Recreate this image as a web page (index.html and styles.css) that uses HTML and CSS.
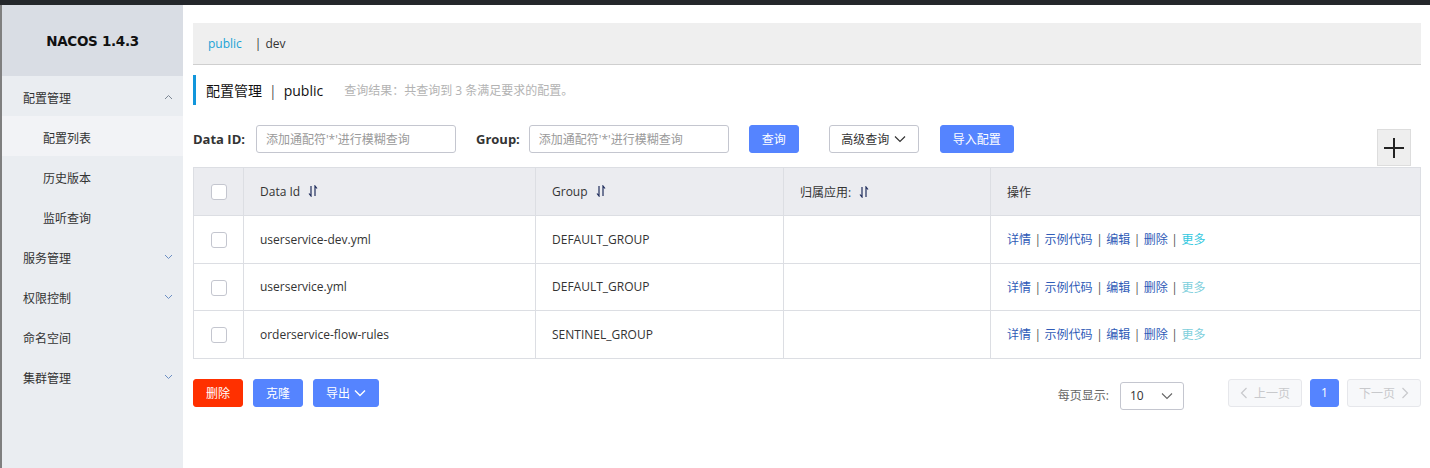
FILE: index.html
```html
<!DOCTYPE html>
<html lang="zh-CN">
<head>
<meta charset="utf-8">
<title>Nacos</title>
<link rel="stylesheet" href="styles.css">
</head>
<body>
<div class="topbar"></div>
<div class="layout">
  <aside class="sidebar">
    <div class="brand">NACOS 1.4.3</div>
    <ul class="menu">
      <li class="menu-item open">配置管理<svg class="caret" width="9" height="6" viewBox="0 0 9 6"><path d="M1 5 L4.5 1.5 L8 5" fill="none" stroke="#7c8794" stroke-width="1"/></svg></li>
      <li class="menu-sub active">配置列表</li>
      <li class="menu-sub">历史版本</li>
      <li class="menu-sub">监听查询</li>
      <li class="menu-item">服务管理<svg class="caret" width="9" height="6" viewBox="0 0 9 6"><path d="M1 1 L4.5 4.5 L8 1" fill="none" stroke="#6c8fc4" stroke-width="1"/></svg></li>
      <li class="menu-item">权限控制<svg class="caret" width="9" height="6" viewBox="0 0 9 6"><path d="M1 1 L4.5 4.5 L8 1" fill="none" stroke="#6c8fc4" stroke-width="1"/></svg></li>
      <li class="menu-item">命名空间</li>
      <li class="menu-item">集群管理<svg class="caret" width="9" height="6" viewBox="0 0 9 6"><path d="M1 1 L4.5 4.5 L8 1" fill="none" stroke="#6c8fc4" stroke-width="1"/></svg></li>
    </ul>
  </aside>
  <main class="main">
    <div class="ns-bar"><span class="ns-active">public</span><span class="ns-sep">|</span><span class="ns-item">dev</span></div>
    <div class="title-row">
      <span class="title">配置管理</span><span class="title-sep">|</span><span class="title-ns">public</span>
      <span class="result">查询结果：共查询到 3 条满足要求的配置。</span>
    </div>
    <div class="form-row">
      <label class="form-label">Data ID:</label>
      <input class="form-input" type="text" placeholder="添加通配符'*'进行模糊查询">
      <label class="form-label group-label">Group:</label>
      <input class="form-input" type="text" placeholder="添加通配符'*'进行模糊查询">
      <button class="btn btn-primary btn-query">查询</button>
      <button class="btn btn-normal btn-adv">高级查询<svg width="12" height="8" viewBox="0 0 12 8"><path d="M1 1.5 L6 6.5 L11 1.5" fill="none" stroke="#333" stroke-width="1.2"/></svg></button>
      <button class="btn btn-primary btn-import">导入配置</button>
      <button class="plus-btn" aria-label="add"><svg width="22" height="22" viewBox="0 0 22 22"><path d="M11 1 V21 M1 11 H21" stroke="#222" stroke-width="2"/></svg></button>
    </div>
    <table class="grid">
      <colgroup>
        <col class="c-check"><col class="c-id"><col class="c-group"><col class="c-app"><col>
      </colgroup>
      <thead>
        <tr>
          <th class="check-cell"><span class="checkbox"></span></th>
          <th>Data Id<svg class="sort" width="10" height="12" viewBox="0 0 10 12"><path d="M3 1 V11 L1 8.5 M7 11 V1 L9 3.5" fill="none" stroke="#1f2d5c" stroke-width="1.2"/></svg></th>
          <th>Group<svg class="sort" width="10" height="12" viewBox="0 0 10 12"><path d="M3 1 V11 L1 8.5 M7 11 V1 L9 3.5" fill="none" stroke="#1f2d5c" stroke-width="1.2"/></svg></th>
          <th>归属应用:<svg class="sort" width="10" height="12" viewBox="0 0 10 12"><path d="M3 1 V11 L1 8.5 M7 11 V1 L9 3.5" fill="none" stroke="#1f2d5c" stroke-width="1.2"/></svg></th>
          <th>操作</th>
        </tr>
      </thead>
      <tbody>
        <tr>
          <td class="check-cell"><span class="checkbox"></span></td>
          <td>userservice-dev.yml</td>
          <td>DEFAULT_GROUP</td>
          <td></td>
          <td class="ops"><a>详情</a><span class="sep">|</span><a>示例代码</a><span class="sep">|</span><a>编辑</a><span class="sep">|</span><a>删除</a><span class="sep">|</span><a class="more">更多</a></td>
        </tr>
        <tr>
          <td class="check-cell"><span class="checkbox"></span></td>
          <td>userservice.yml</td>
          <td>DEFAULT_GROUP</td>
          <td></td>
          <td class="ops"><a>详情</a><span class="sep">|</span><a>示例代码</a><span class="sep">|</span><a>编辑</a><span class="sep">|</span><a>删除</a><span class="sep">|</span><a class="more muted">更多</a></td>
        </tr>
        <tr>
          <td class="check-cell"><span class="checkbox"></span></td>
          <td>orderservice-flow-rules</td>
          <td>SENTINEL_GROUP</td>
          <td></td>
          <td class="ops"><a>详情</a><span class="sep">|</span><a>示例代码</a><span class="sep">|</span><a>编辑</a><span class="sep">|</span><a>删除</a><span class="sep">|</span><a class="more muted">更多</a></td>
        </tr>
      </tbody>
    </table>
    <div class="footer-row">
      <div class="batch">
        <button class="btn btn-danger btn-small">删除</button>
        <button class="btn btn-primary btn-small">克隆</button>
        <button class="btn btn-primary btn-export">导出<svg width="12" height="8" viewBox="0 0 12 8"><path d="M1 1.5 L6 6.5 L11 1.5" fill="none" stroke="#fff" stroke-width="1.4"/></svg></button>
      </div>
      <div class="pager">
        <span class="page-size-label">每页显示:</span>
        <div class="page-select"><span>10</span><svg width="12" height="8" viewBox="0 0 12 8"><path d="M1 1.5 L6 6.5 L11 1.5" fill="none" stroke="#666" stroke-width="1.1"/></svg></div>
        <button class="page-btn disabled prev"><svg width="8" height="12" viewBox="0 0 8 12"><path d="M6.5 1 L1.5 6 L6.5 11" fill="none" stroke="#c8c9cc" stroke-width="1.2"/></svg>上一页</button>
        <button class="page-num current">1</button>
        <button class="page-btn disabled next">下一页<svg width="8" height="12" viewBox="0 0 8 12"><path d="M1.5 1 L6.5 6 L1.5 11" fill="none" stroke="#c8c9cc" stroke-width="1.2"/></svg></button>
      </div>
    </div>
  </main>
</div>
</body>
</html>
```

FILE: styles.css
```css
* { box-sizing: border-box; }
html, body { margin: 0; padding: 0; }
body {
  width: 1430px;
  height: 468px;
  overflow: hidden;
  background: #fff;
  font-family: "Open Sans", "Noto Sans CJK SC", sans-serif;
  font-size: 12px;
  color: #333;
}
.topbar { height: 5px; background: #24272b; }
.layout { display: flex; height: 463px; }

.sidebar {
  width: 183px;
  flex: none;
  background: #eaedf1;
  border-left: 2px solid #7f7f7f;
}
.brand {
  height: 71px;
  background: #d9dde4;
  display: flex;
  align-items: center;
  justify-content: center;
  font-family: "DejaVu Sans", sans-serif;
  font-weight: bold;
  font-size: 13.5px;
  color: #111;
  letter-spacing: -0.3px;
}
.menu { list-style: none; margin: 0; padding: 0; }
.menu li {
  height: 40px;
  display: flex;
  align-items: center;
  font-size: 12px;
  color: #333;
  font-family: "Noto Sans CJK SC", sans-serif;
  padding-top: 2px;
}
.menu-item { padding-left: 21px; padding-right: 10px; justify-content: space-between; }
.menu-sub { padding-left: 41px; }
.menu-sub.active { background: #f2f3f6; }
.caret { display: block; }

.main { flex: 1; padding: 18px 9px 0 10px; min-width: 0; }
.ns-bar {
  height: 42px;
  background: #efefef;
  border-bottom: 1px solid #cfcfcf;
  display: flex;
  align-items: center;
  padding-left: 15px;
  font-size: 12px;
}
.ns-active { color: #1ba3d6; }
.ns-sep { margin-left: 13px; margin-right: 4px; color: #333; }
.ns-item { color: #333; }

.title-row {
  margin-top: 10px;
  height: 30px;
  border-left: 3px solid #1296db;
  padding-left: 10px;
  display: flex;
  align-items: center;
}
.title { font-size: 14px; color: #111; font-family: "Noto Sans CJK SC", sans-serif; }
.title-sep { font-size: 14px; margin: 0 7px; color: #555; }
.title-ns { font-size: 14px; color: #111; }
.result { margin-left: 21px; color: #b3b3b3; font-size: 12px; }

.form-row {
  margin-top: 20px;
  display: flex;
  align-items: flex-start;
  height: 42px;
}
.form-label {
  font-weight: bold;
  font-size: 13px;
  line-height: 28px;
  color: #333;
  margin-right: 11px;
}
.group-label { margin-left: 20px; margin-right: 9px; }
.form-input {
  width: 200px;
  height: 28px;
  border: 1px solid #c4c6cf;
  border-radius: 3px;
  padding: 0 9px;
  font-size: 12px;
  font-family: inherit;
  color: #333;
  outline: none;
}
.form-input::placeholder { color: #9a9a9a; }
.btn {
  height: 28px;
  border-radius: 3px;
  border: 1px solid transparent;
  font-size: 12px;
  font-family: inherit;
  padding: 0;
  display: inline-flex;
  align-items: center;
  justify-content: center;
  cursor: pointer;
}
.btn-primary { background: #5584ff; color: #fff; border-color: #5584ff; }
.btn-normal { background: #fff; color: #333; border-color: #c4c6cf; }
.btn-danger { background: #ff3000; color: #fff; border-color: #ff3000; }
.btn-query { width: 50px; margin-left: 20px; }
.btn-adv { width: 90px; margin-left: 30px; gap: 5px; }
.btn-import { width: 74px; margin-left: 21px; }
.plus-btn {
  margin-left: auto;
  margin-right: 10px;
  margin-top: 4px;
  width: 34px;
  height: 37px;
  background: #eeeeee;
  border: 1px solid #dddddd;
  padding: 0;
  display: flex;
  align-items: center;
  justify-content: center;
}

.grid {
  width: 1228px;
  border-collapse: collapse;
  table-layout: fixed;
  border: 1px solid #dcdee3;
}
.c-check { width: 50px; }
.c-id { width: 292px; }
.c-group { width: 248px; }
.c-app { width: 207px; }
.grid th, .grid td {
  border: 1px solid #dcdee3;
  padding: 0 16px;
  text-align: left;
  font-size: 12px;
  color: #333;
  white-space: nowrap;
}
.grid th { height: 48px; background: #ebecf0; font-weight: normal; }
.grid td { height: 47.5px; }
.grid .check-cell { padding: 0; text-align: center; }
.checkbox {
  display: inline-block;
  width: 16px;
  height: 16px;
  border: 1px solid #c4c6cf;
  border-radius: 3px;
  background: #fff;
  vertical-align: middle;
}
.sort { margin-left: 8px; vertical-align: -1px; }
.ops a { color: #2f5bb7; }
.ops .sep { color: #555; margin: 0 3.5px; }
.ops .more { color: #33c8e0; }
.ops .more.muted { color: #80cfdc; }

.footer-row {
  margin-top: 20px;
  display: flex;
  justify-content: space-between;
  align-items: flex-start;
}
.batch { display: flex; gap: 10px; }
.btn-small { width: 50px; }
.btn-export { width: 66px; gap: 4px; }
.pager { display: flex; align-items: flex-start; }
.page-size-label { color: #666; line-height: 28px; margin-top: 3px; }
.page-select {
  margin-top: 3px;
  margin-left: 11px;
  width: 64px;
  height: 28px;
  border: 1px solid #c4c6cf;
  border-radius: 3px;
  display: flex;
  align-items: center;
  justify-content: space-between;
  padding: 0 10px 0 9px;
  color: #333;
}
.page-btn {
  height: 28px;
  width: 74px;
  border: 1px solid #e6e7eb;
  background: #f7f8fa;
  border-radius: 3px;
  color: #c8c9cc;
  font-size: 12px;
  font-family: inherit;
  display: flex;
  align-items: center;
  justify-content: center;
  gap: 6px;
  padding: 0;
}
.prev { margin-left: 44px; }
.page-num {
  height: 28px;
  width: 29px;
  margin: 0 8px;
  border-radius: 3px;
  border: 1px solid #5584ff;
  background: #5584ff;
  color: #fff;
  font-size: 12px;
  font-family: inherit;
  padding: 0;
}
```
